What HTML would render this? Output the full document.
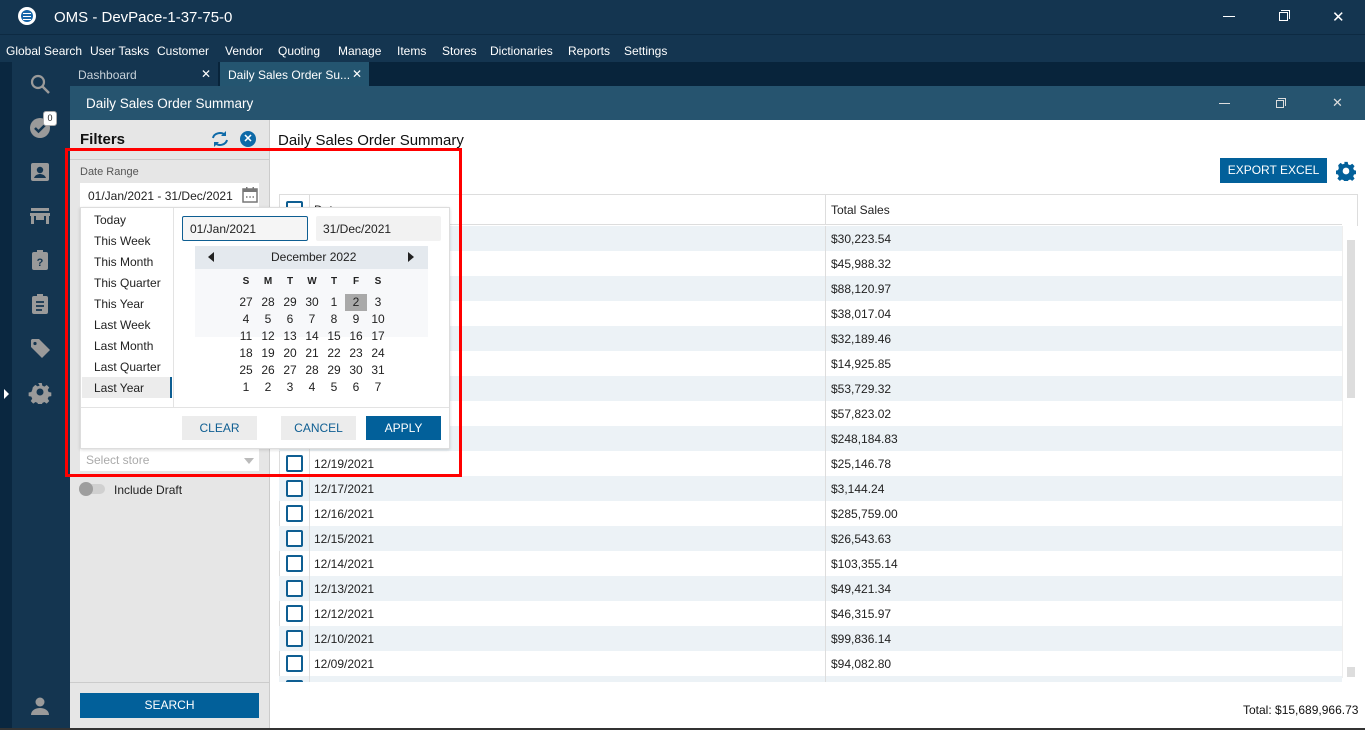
<!DOCTYPE html>
<html><head><meta charset="utf-8">
<style>
*{margin:0;padding:0;box-sizing:border-box}
body{width:1365px;height:730px;overflow:hidden;font-family:"Liberation Sans",sans-serif;font-size:12px;color:#222;background:#fff;position:relative}
.a{position:absolute}
.ic{position:absolute;left:28px;width:24px;height:24px;fill:#9a9a9a}
.row{position:absolute;left:279px;width:1063px;height:25px}
.row .cb{position:absolute;left:7px;top:4px;width:17px;height:17px;border:2px solid #0e5e92;border-radius:2px;background:#fff}
.row .d{position:absolute;left:35px;top:6px;font-size:12px}
.row .t{position:absolute;left:552px;top:6px;font-size:12px}
.row .v1{position:absolute;left:30px;top:0;width:1px;height:25px;background:#ddd}
.row .v2{position:absolute;left:546px;top:0;width:1px;height:25px;background:#ddd}
.alt{background:#ecf2f6}
.pre{position:absolute;left:94px;font-size:12px;color:#222}
.cal span{position:absolute;width:20px;text-align:center;font-size:12px;color:#222}
.btn{position:absolute;height:24px;text-align:center;line-height:24px;font-size:12px}
</style></head><body>
<div class="a" style="left:0;top:0;width:1365px;height:34px;background:#143550"></div>
<div class="a" style="left:18px;top:7px;width:18px;height:18px;border-radius:50%;background:#fff"></div>
<div class="a" style="left:21px;top:10px;width:12px;height:12px;border-radius:50%;background:#1565a8"></div>
<div class="a" style="left:23px;top:13px;width:8px;height:1px;background:#fff"></div>
<div class="a" style="left:23px;top:16px;width:8px;height:1px;background:#fff"></div>
<div class="a" style="left:23px;top:19px;width:8px;height:1px;background:#fff"></div>
<div class="a" style="left:54px;top:9px;color:#fff;font-size:15px">OMS - DevPace-1-37-75-0</div>
<div class="a" style="left:1223px;top:16px;width:12px;height:1px;background:#fff"></div>
<div class="a" style="left:1279px;top:12px;width:9px;height:9px;border:1px solid #fff"></div>
<div class="a" style="left:1281px;top:10px;width:9px;height:9px;border-top:1px solid #fff;border-right:1px solid #fff"></div>
<div class="a" style="left:1332px;top:8px;color:#fff;font-size:15px">✕</div>
<div class="a" style="left:0;top:34px;width:1365px;height:28px;background:#143550;border-top:1px solid #0d2a42"></div>
<div class="a" style="left:6px;top:44px;color:#fff;font-size:12px">
<span style="position:absolute;left:0;white-space:nowrap">Global Search</span>
<span style="position:absolute;left:84px;white-space:nowrap">User Tasks</span>
<span style="position:absolute;left:151px;white-space:nowrap">Customer</span>
<span style="position:absolute;left:219px;white-space:nowrap">Vendor</span>
<span style="position:absolute;left:272px;white-space:nowrap">Quoting</span>
<span style="position:absolute;left:332px;white-space:nowrap">Manage</span>
<span style="position:absolute;left:391px;white-space:nowrap">Items</span>
<span style="position:absolute;left:436px;white-space:nowrap">Stores</span>
<span style="position:absolute;left:484px;white-space:nowrap">Dictionaries</span>
<span style="position:absolute;left:562px;white-space:nowrap">Reports</span>
<span style="position:absolute;left:618px;white-space:nowrap">Settings</span>
</div>
<div class="a" style="left:0;top:62px;width:12px;height:668px;background:#0a2740"></div>
<div class="a" style="left:12px;top:62px;width:58px;height:668px;background:#143550"></div>
<div class="a" style="left:4px;top:389px;width:0;height:0;border-top:5px solid transparent;border-bottom:5px solid transparent;border-left:5px solid #fff"></div>
<svg class="ic" style="top:72px" viewBox="0 0 24 24"><circle cx="10" cy="10" r="6" fill="none" stroke="#9a9a9a" stroke-width="2.2"/><path d="M14.5 14.5 L21 21" stroke="#9a9a9a" stroke-width="2.5"/></svg>
<svg class="ic" style="top:116px" viewBox="0 0 24 24"><circle cx="12" cy="12" r="10"/><path d="M7 12l3.5 3.5L17 9" stroke="#143550" stroke-width="2.5" fill="none"/></svg>
<div class="a" style="left:43px;top:111px;width:14px;height:15px;background:#fff;border-radius:3px;border:1px solid #aaa;font-size:9px;text-align:center;line-height:13px;color:#222">0</div>
<svg class="ic" style="top:160px" viewBox="0 0 24 24"><rect x="3" y="3" width="18" height="18" rx="2"/><circle cx="12" cy="10" r="3.2" fill="#143550"/><path d="M6 18c1-3 4-4 6-4s5 1 6 4z" fill="#143550"/></svg>
<svg class="ic" style="top:204px" viewBox="0 0 24 24"><rect x="3" y="4" width="18" height="3"/><path d="M2 9h20v3H2z"/><rect x="3" y="12" width="3" height="8"/><rect x="18" y="12" width="3" height="8"/><rect x="8" y="12" width="8" height="4"/></svg>
<svg class="ic" style="top:248px" viewBox="0 0 24 24"><rect x="4" y="4" width="16" height="18" rx="2"/><rect x="9" y="2" width="6" height="4" fill="#9a9a9a"/><text x="12" y="18" font-size="11" font-weight="bold" text-anchor="middle" fill="#143550" font-family="Liberation Sans">?</text></svg>
<svg class="ic" style="top:292px" viewBox="0 0 24 24"><rect x="4" y="4" width="16" height="18" rx="2"/><rect x="9" y="2" width="6" height="4"/><path d="M8 10h8M8 14h8M8 18h6" stroke="#143550" stroke-width="1.8"/></svg>
<svg class="ic" style="top:336px" viewBox="0 0 24 24"><path d="M3 4v7l11 11 8-8L11 3H4z"/><circle cx="7" cy="7.5" r="1.6" fill="#143550"/></svg>
<svg class="ic" style="top:380px" viewBox="0 0 24 24"><path d="M10 2h4l.6 3 2.3 1 2.6-1.7 2.8 2.8-1.7 2.6 1 2.3 3 .6v4l-3 .6-1 2.3 1.7 2.6-2.8 2.8-2.6-1.7-2.3 1-.6 3h-4l-.6-3-2.3-1-2.6 1.7-2.8-2.8 1.7-2.6-1-2.3-3-.6v-4l3-.6 1-2.3L4 6.9l2.8-2.8 2.6 1.7 2.3-1z" transform="scale(.9) translate(1.3 1.3)"/><circle cx="12" cy="12" r="3.5" fill="#143550"/></svg>
<svg class="ic" style="top:694px" viewBox="0 0 24 24"><circle cx="12" cy="8" r="4.5"/><path d="M3 21c0-5 5-7 9-7s9 2 9 7z"/></svg>
<div class="a" style="left:70px;top:62px;width:1295px;height:24px;background:#08243b"></div>
<div class="a" style="left:70px;top:62px;width:148px;height:24px;background:#143550"></div>
<div class="a" style="left:78px;top:68px;color:#c8d2da;font-size:12px">Dashboard</div>
<div class="a" style="left:201px;top:67px;color:#fff;font-size:12px">✕</div>
<div class="a" style="left:220px;top:62px;width:149px;height:24px;background:#245570"></div>
<div class="a" style="left:228px;top:68px;color:#fff;font-size:12px">Daily Sales Order Su...</div>
<div class="a" style="left:352px;top:67px;color:#fff;font-size:12px">✕</div>
<div class="a" style="left:70px;top:86px;width:1295px;height:34px;background:#26546f"></div>
<div class="a" style="left:86px;top:96px;color:#fff;font-size:13.5px">Daily Sales Order Summary</div>
<div class="a" style="left:1219px;top:103px;width:11px;height:1px;background:#ddd"></div>
<div class="a" style="left:1276px;top:100px;width:8px;height:8px;border:1px solid #ddd"></div>
<div class="a" style="left:1278px;top:98px;width:8px;height:8px;border-top:1px solid #ddd;border-right:1px solid #ddd"></div>
<div class="a" style="left:1332px;top:95px;color:#ddd;font-size:13px">✕</div>
<div class="a" style="left:70px;top:120px;width:200px;height:608px;background:#e6e6e6;border-right:1px solid #ccc"></div>
<div class="a" style="left:80px;top:131px;font-size:15px;font-weight:bold;color:#111">Filters</div>
<svg class="a" style="left:210px;top:130px" width="20" height="18" viewBox="0 0 20 18"><path d="M3 8a7 6 0 0 1 12-3" stroke="#0e6aa8" stroke-width="2" fill="none"/><path d="M16 1v5h-5z" fill="#0e6aa8"/><path d="M17 10a7 6 0 0 1-12 3" stroke="#0e6aa8" stroke-width="2" fill="none"/><path d="M4 17v-5h5z" fill="#0e6aa8"/></svg>
<div class="a" style="left:240px;top:131px;width:16px;height:16px;border-radius:50%;background:#0e6aa8;color:#fff;font-size:11px;text-align:center;line-height:16px;font-weight:bold">✕</div>
<div class="a" style="left:70px;top:159px;width:200px;height:1px;background:#ccc"></div>
<div class="a" style="left:80px;top:166px;color:#555;font-size:11px">Date Range</div>
<div class="a" style="left:80px;top:183px;width:179px;height:25px;background:#fff"></div>
<div class="a" style="left:88px;top:189px;font-size:12px;color:#222">01/Jan/2021 - 31/Dec/2021</div>
<svg class="a" style="left:242px;top:186px" width="16" height="17" viewBox="0 0 16 17"><rect x="1" y="3" width="14" height="13" fill="none" stroke="#777" stroke-width="1.5"/><rect x="1" y="3" width="14" height="3" fill="#777"/><rect x="4" y="1" width="1.5" height="3" fill="#777"/><rect x="10.5" y="1" width="1.5" height="3" fill="#777"/><path d="M4 11h1.5M7.3 11h1.5M10.5 11h1.5" stroke="#777" stroke-width="1.5"/></svg>
<div class="a" style="left:80px;top:449px;width:179px;height:22px;background:#fff"></div>
<div class="a" style="left:86px;top:453px;color:#aaa;font-size:12px">Select store</div>
<div class="a" style="left:244px;top:458px;border-left:5px solid transparent;border-right:5px solid transparent;border-top:6px solid #bbb"></div>
<div class="a" style="left:80px;top:484px;width:25px;height:10px;border-radius:5px;background:#d0d0d0"></div>
<div class="a" style="left:79px;top:482px;width:14px;height:14px;border-radius:50%;background:#9e9e9e"></div>
<div class="a" style="left:114px;top:483px;font-size:12px;color:#222">Include Draft</div>
<div class="a" style="left:70px;top:682px;width:200px;height:1px;background:#ccc"></div>
<div class="a btn" style="left:80px;top:693px;width:179px;height:25px;line-height:25px;background:#02609a;color:#fff">SEARCH</div>
<div class="a" style="left:278px;top:132px;font-size:15px;color:#111">Daily Sales Order Summary</div>
<div class="a btn" style="left:1220px;top:158px;width:107px;height:25px;line-height:25px;background:#02609a;color:#fff">EXPORT EXCEL</div>
<svg class="a" style="left:1336px;top:161px" width="20" height="20" viewBox="0 0 24 24"><path d="M10 1h4l.6 3 2.3 1 2.6-1.7 2.8 2.8-1.7 2.6 1 2.3 3 .6v4l-3 .6-1 2.3 1.7 2.6-2.8 2.8-2.6-1.7-2.3 1-.6 3h-4l-.6-3-2.3-1-2.6 1.7-2.8-2.8 1.7-2.6-1-2.3-3-.6v-4l3-.6 1-2.3L2.6 5.1l2.8-2.8 2.6 1.7 2.3-1z" fill="#02609a"/><circle cx="12" cy="12" r="4" fill="#fff"/></svg>
<div class="a" style="left:279px;top:194px;width:1079px;height:484px;border:1px solid #ddd;border-bottom:none"></div>
<div class="row" style="top:195px;height:30px;border-bottom:1px solid #ddd"><div class="cb" style="top:6px"></div><div class="d" style="top:8px">Date</div><div class="t" style="top:8px">Total Sales</div><div class="v1" style="height:30px"></div><div class="v2" style="height:30px"></div></div>
<div class="a" style="left:1342px;top:226px;width:16px;height:452px;background:#fff;border-left:1px solid #eee"></div>
<div class="a" style="left:1347px;top:240px;width:8px;height:158px;background:#ddd"></div>
<div class="a" style="left:1347px;top:667px;width:8px;height:10px;background:#ddd"></div>
<div class="row alt" style="top:226px"><div class="cb"></div><div class="d">12/31/2021</div><div class="t">$30,223.54</div><div class="v1"></div><div class="v2"></div></div>
<div class="row" style="top:251px"><div class="cb"></div><div class="d">12/30/2021</div><div class="t">$45,988.32</div><div class="v1"></div><div class="v2"></div></div>
<div class="row alt" style="top:276px"><div class="cb"></div><div class="d">12/29/2021</div><div class="t">$88,120.97</div><div class="v1"></div><div class="v2"></div></div>
<div class="row" style="top:301px"><div class="cb"></div><div class="d">12/28/2021</div><div class="t">$38,017.04</div><div class="v1"></div><div class="v2"></div></div>
<div class="row alt" style="top:326px"><div class="cb"></div><div class="d">12/27/2021</div><div class="t">$32,189.46</div><div class="v1"></div><div class="v2"></div></div>
<div class="row" style="top:351px"><div class="cb"></div><div class="d">12/26/2021</div><div class="t">$14,925.85</div><div class="v1"></div><div class="v2"></div></div>
<div class="row alt" style="top:376px"><div class="cb"></div><div class="d">12/24/2021</div><div class="t">$53,729.32</div><div class="v1"></div><div class="v2"></div></div>
<div class="row" style="top:401px"><div class="cb"></div><div class="d">12/22/2021</div><div class="t">$57,823.02</div><div class="v1"></div><div class="v2"></div></div>
<div class="row alt" style="top:426px"><div class="cb"></div><div class="d">12/20/2021</div><div class="t">$248,184.83</div><div class="v1"></div><div class="v2"></div></div>
<div class="row" style="top:451px"><div class="cb"></div><div class="d">12/19/2021</div><div class="t">$25,146.78</div><div class="v1"></div><div class="v2"></div></div>
<div class="row alt" style="top:476px"><div class="cb"></div><div class="d">12/17/2021</div><div class="t">$3,144.24</div><div class="v1"></div><div class="v2"></div></div>
<div class="row" style="top:501px"><div class="cb"></div><div class="d">12/16/2021</div><div class="t">$285,759.00</div><div class="v1"></div><div class="v2"></div></div>
<div class="row alt" style="top:526px"><div class="cb"></div><div class="d">12/15/2021</div><div class="t">$26,543.63</div><div class="v1"></div><div class="v2"></div></div>
<div class="row" style="top:551px"><div class="cb"></div><div class="d">12/14/2021</div><div class="t">$103,355.14</div><div class="v1"></div><div class="v2"></div></div>
<div class="row alt" style="top:576px"><div class="cb"></div><div class="d">12/13/2021</div><div class="t">$49,421.34</div><div class="v1"></div><div class="v2"></div></div>
<div class="row" style="top:601px"><div class="cb"></div><div class="d">12/12/2021</div><div class="t">$46,315.97</div><div class="v1"></div><div class="v2"></div></div>
<div class="row alt" style="top:626px"><div class="cb"></div><div class="d">12/10/2021</div><div class="t">$99,836.14</div><div class="v1"></div><div class="v2"></div></div>
<div class="row" style="top:651px"><div class="cb"></div><div class="d">12/09/2021</div><div class="t">$94,082.80</div><div class="v1"></div><div class="v2"></div></div>
<div class="row alt" style="top:676px;height:6px;overflow:hidden"><div class="cb"></div><div class="v1"></div><div class="v2"></div></div>
<div class="a" style="left:270px;top:682px;width:1095px;height:46px;background:#fff"></div>
<div class="a" style="left:1243px;top:703px;font-size:12px;color:#111">Total: $15,689,966.73</div>
<div class="a" style="left:0;top:728px;width:1365px;height:2px;background:#333"></div>
<div class="a" style="left:80px;top:207px;width:370px;height:242px;background:#fff;border:1px solid #ddd;box-shadow:0 1px 3px rgba(0,0,0,.15)"></div>
<div class="a" style="left:173px;top:208px;width:1px;height:199px;background:#e3e3e3"></div>
<div class="a" style="left:81px;top:407px;width:368px;height:1px;background:#e3e3e3"></div>
<div class="pre" style="top:213px">Today</div>
<div class="pre" style="top:234px">This Week</div>
<div class="pre" style="top:255px">This Month</div>
<div class="pre" style="top:276px">This Quarter</div>
<div class="pre" style="top:297px">This Year</div>
<div class="pre" style="top:318px">Last Week</div>
<div class="pre" style="top:339px">Last Month</div>
<div class="pre" style="top:360px">Last Quarter</div>
<div class="a" style="left:82px;top:377px;width:90px;height:21px;background:#ececec;border-right:2px solid #0e5e92"></div>
<div class="pre" style="top:381px">Last Year</div>
<div class="a" style="left:182px;top:216px;width:126px;height:25px;border:1px solid #0e5e92;border-radius:2px;background:#f5f5f5"></div>
<div class="a" style="left:190px;top:222px;font-size:12px">01/Jan/2021</div>
<div class="a" style="left:316px;top:216px;width:125px;height:25px;background:#f2f2f2;border-radius:2px"></div>
<div class="a" style="left:323px;top:222px;font-size:12px">31/Dec/2021</div>
<div class="a" style="left:195px;top:246px;width:233px;height:23px;background:#e4e9ee"></div>
<div class="a" style="left:208px;top:252px;border-top:5px solid transparent;border-bottom:5px solid transparent;border-right:6px solid #222"></div>
<div class="a" style="left:408px;top:252px;border-top:5px solid transparent;border-bottom:5px solid transparent;border-left:6px solid #222"></div>
<div class="a" style="left:271px;top:250px;font-size:12px">December 2022</div>
<div class="a" style="left:195px;top:269px;width:233px;height:68px;background:#f7f8fa"></div>
<div class="a" style="left:345px;top:294px;width:22px;height:17px;background:#a9a9a9"></div>
<div class="a cal" style="left:0;top:0">
<span style="left:236px;top:276px;font-weight:bold;font-size:10px">S</span><span style="left:258px;top:276px;font-weight:bold;font-size:10px">M</span><span style="left:280px;top:276px;font-weight:bold;font-size:10px">T</span><span style="left:302px;top:276px;font-weight:bold;font-size:10px">W</span><span style="left:324px;top:276px;font-weight:bold;font-size:10px">T</span><span style="left:346px;top:276px;font-weight:bold;font-size:10px">F</span><span style="left:368px;top:276px;font-weight:bold;font-size:10px">S</span>
<span style="left:236px;top:295px">27</span><span style="left:258px;top:295px">28</span><span style="left:280px;top:295px">29</span><span style="left:302px;top:295px">30</span><span style="left:324px;top:295px">1</span><span style="left:346px;top:295px">2</span><span style="left:368px;top:295px">3</span>
<span style="left:236px;top:312px">4</span><span style="left:258px;top:312px">5</span><span style="left:280px;top:312px">6</span><span style="left:302px;top:312px">7</span><span style="left:324px;top:312px">8</span><span style="left:346px;top:312px">9</span><span style="left:368px;top:312px">10</span>
<span style="left:236px;top:329px">11</span><span style="left:258px;top:329px">12</span><span style="left:280px;top:329px">13</span><span style="left:302px;top:329px">14</span><span style="left:324px;top:329px">15</span><span style="left:346px;top:329px">16</span><span style="left:368px;top:329px">17</span>
<span style="left:236px;top:346px">18</span><span style="left:258px;top:346px">19</span><span style="left:280px;top:346px">20</span><span style="left:302px;top:346px">21</span><span style="left:324px;top:346px">22</span><span style="left:346px;top:346px">23</span><span style="left:368px;top:346px">24</span>
<span style="left:236px;top:363px">25</span><span style="left:258px;top:363px">26</span><span style="left:280px;top:363px">27</span><span style="left:302px;top:363px">28</span><span style="left:324px;top:363px">29</span><span style="left:346px;top:363px">30</span><span style="left:368px;top:363px">31</span>
<span style="left:236px;top:380px">1</span><span style="left:258px;top:380px">2</span><span style="left:280px;top:380px">3</span><span style="left:302px;top:380px">4</span><span style="left:324px;top:380px">5</span><span style="left:346px;top:380px">6</span><span style="left:368px;top:380px">7</span>
</div>
<div class="btn" style="left:182px;top:416px;width:75px;background:#ececec;color:#0e5e92">CLEAR</div>
<div class="btn" style="left:281px;top:416px;width:75px;background:#ececec;color:#0e5e92">CANCEL</div>
<div class="btn" style="left:366px;top:416px;width:75px;background:#02609a;color:#fff">APPLY</div>
<div class="a" style="left:65px;top:148px;width:397px;height:329px;border:3px solid #f00"></div>
</body></html>
